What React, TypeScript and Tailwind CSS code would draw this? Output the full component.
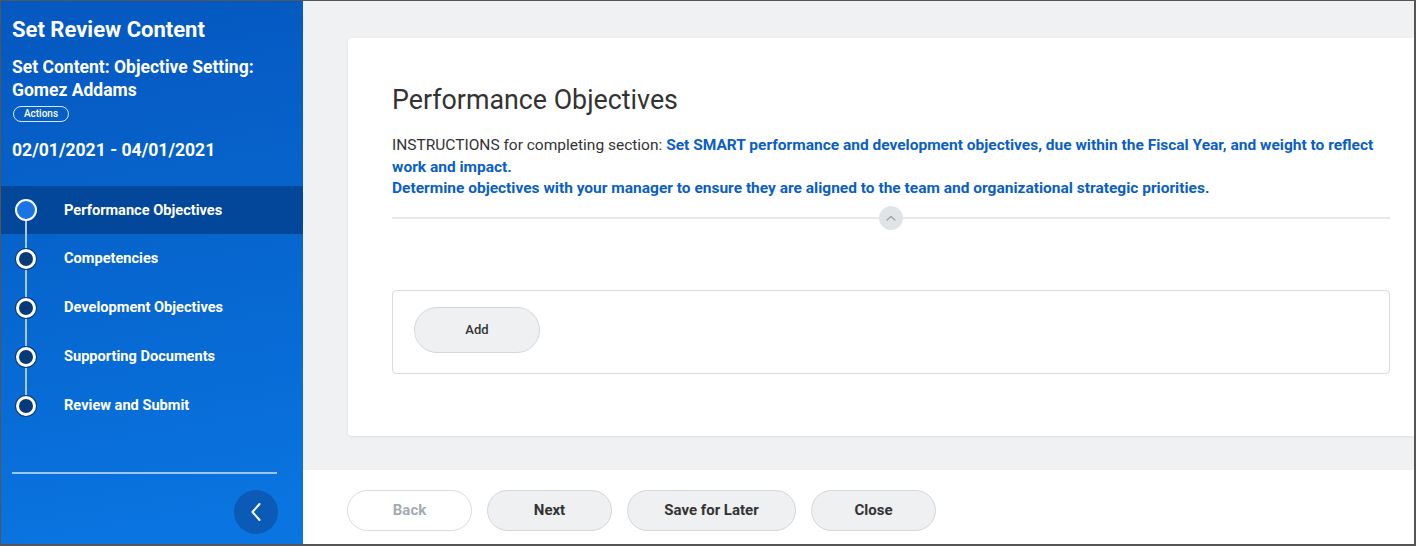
import React from "react";

const steps = [
  "Performance Objectives",
  "Competencies",
  "Development Objectives",
  "Supporting Documents",
  "Review and Submit",
];

function StepRow({ label, index }: { label: string; index: number }) {
  const active = index === 0;
  const first = index === 0;
  const last = index === steps.length - 1;
  return (
    <div
      className={
        "relative flex items-center " +
        (active ? "h-[48px] bg-[#03479a]" : "h-[49px]")
      }
    >
      <div className="relative w-[50px] h-full shrink-0 flex items-center justify-center">
        {!first && (
          <div className="absolute left-[24px] top-0 w-[2px] h-1/2 bg-[#a7c7ee]" />
        )}
        {!last && (
          <div className="absolute left-[24px] bottom-0 w-[2px] h-1/2 bg-[#a7c7ee]" />
        )}
        {active ? (
          <div className="relative w-[22px] h-[22px] rounded-full bg-[#1a74e4] border-2 border-white" />
        ) : (
          <div className="relative w-[20px] h-[20px] rounded-full bg-[#063a78] border-[3px] border-white shadow-[0_0_0_1px_#063a78]" />
        )}
      </div>
      <span className="ml-[13px] text-[14.6px] font-bold text-white leading-none">
        {label}
      </span>
    </div>
  );
}

function Btn({
  children,
  w,
  muted,
}: {
  children: React.ReactNode;
  w: string;
  muted?: boolean;
}) {
  return (
    <button
      className={
        "h-[41px] rounded-full border text-[15px] font-bold flex items-center justify-center " +
        w +
        (muted
          ? " bg-white border-[#d9dde0] text-[#a3abb3]"
          : " bg-[#eef0f2] border-[#d3d7db] text-[#333333]")
      }
    >
      {children}
    </button>
  );
}

export default function App() {
  return (
    <div
      className="w-[1416px] h-[546px] overflow-hidden flex border-l border-t border-r-2 border-b-2 border-[#555555]"
      style={{ fontFamily: "Roboto, 'Noto Sans', sans-serif" }}
    >
      {/* Sidebar */}
      <aside className="w-[302px] shrink-0 flex flex-col bg-[linear-gradient(170deg,#0558bf_0%,#0766cf_50%,#0a76e2_100%)] text-white">
        <div className="px-[11px]">
          <h1 className="mt-[15px] text-[22px] leading-[28px] font-bold">
            Set Review Content
          </h1>
          <p className="mt-[12px] text-[17.5px] leading-[23px] font-bold">
            Set Content: Objective Setting:
            <br />
            Gomez Addams
          </p>
          <div className="mt-[4px] ml-[1px] w-[56px] h-[16px] rounded-full border border-[#dbe8f8] flex items-center justify-center text-[10px] font-medium leading-none">
            Actions
          </div>
          <div className="mt-[16px] text-[17.6px] leading-[24px] font-bold">
            02/01/2021 - 04/01/2021
          </div>
        </div>
        <div className="mt-[24px] flex flex-col">
          {steps.map((s, i) => (
            <StepRow key={s} label={s} index={i} />
          ))}
        </div>
        <div className="mt-[42px] ml-[11px] w-[265px] h-[2px] bg-[#9fc4f0]" />
        <div className="mt-[16px] self-end mr-[25px] w-[44px] h-[44px] rounded-full bg-[#0a5ab6] flex items-center justify-center">
          <svg width="14" height="22" viewBox="0 0 14 22" fill="none">
            <path
              d="M10.5 3 L3.5 11 L10.5 19"
              stroke="white"
              strokeWidth="2"
              strokeLinecap="round"
              strokeLinejoin="round"
            />
          </svg>
        </div>
      </aside>

      {/* Main */}
      <main className="flex-1 flex flex-col min-w-0">
        <div className="h-[469px] bg-[#f0f1f2] pt-[37px] pl-[45px]">
          <div className="h-[398px] bg-white rounded-l-[4px] shadow-[0_1px_3px_rgba(0,0,0,0.08)] pl-[44px] pr-[24px] pt-[45px]">
            <h2 className="text-[26.8px] leading-[34px] text-[#333333]">
              Performance Objectives
            </h2>
            <p className="mt-[18px] text-[15.5px] leading-[21.5px] text-[#333333]">
              INSTRUCTIONS for completing section:{" "}
              <span className="font-bold text-[#0b5fc3]">
                Set SMART performance and development objectives, due within the
                Fiscal Year, and weight to reflect work and impact.
                <br />
                Determine objectives with your manager to ensure they are aligned
                to the team and organizational strategic priorities.
              </span>
            </p>
            <div className="mt-[17px] relative h-[2px] bg-[#e6e9ec] flex items-center justify-center">
              <div className="absolute w-[24px] h-[24px] rounded-full bg-[#e1e4e7] flex items-center justify-center">
                <svg width="10" height="6" viewBox="0 0 10 6" fill="none">
                  <path
                    d="M1 5 L5 1.5 L9 5"
                    stroke="#9aa1a8"
                    strokeWidth="1.3"
                    strokeLinecap="round"
                    strokeLinejoin="round"
                  />
                </svg>
              </div>
            </div>
            <div className="mt-[71px] h-[84px] rounded-[4px] border border-[#d9dde1] pl-[21px] pt-[16px]">
              <button className="w-[126px] h-[46px] rounded-full bg-[#eef0f2] border border-[#d3d7db] text-[13px] font-medium text-[#333333]">
                Add
              </button>
            </div>
          </div>
        </div>
        <div className="flex-1 bg-white pl-[44px] pt-[20px] flex gap-[15px]">
          <Btn w="w-[125px]" muted>
            Back
          </Btn>
          <Btn w="w-[125px]">Next</Btn>
          <Btn w="w-[169px]">Save for Later</Btn>
          <Btn w="w-[125px]">Close</Btn>
        </div>
      </main>
    </div>
  );
}
